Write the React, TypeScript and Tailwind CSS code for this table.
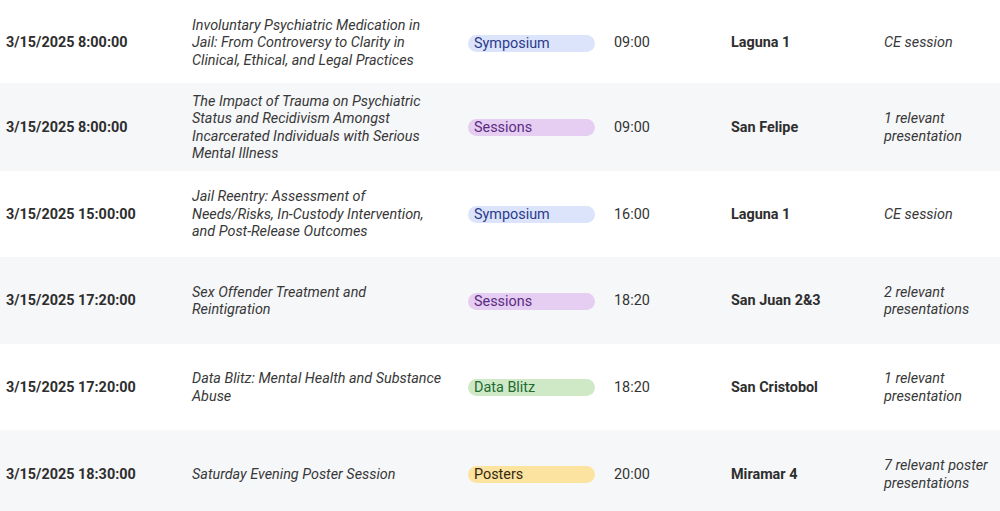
const sessions = [
  {
    date: "3/15/2025 8:00:00",
    title: "Involuntary Psychiatric Medication in Jail: From Controversy to Clarity in Clinical, Ethical, and Legal Practices",
    type: "Symposium",
    end: "09:00",
    room: "Laguna 1",
    note: "CE session",
    h: "h-[83px] pt-[3px]",
  },
  {
    date: "3/15/2025 8:00:00",
    title: "The Impact of Trauma on Psychiatric Status and Recidivism Amongst Incarcerated Individuals with Serious Mental Illness",
    type: "Sessions",
    end: "09:00",
    room: "San Felipe",
    note: "1 relevant presentation",
    h: "h-[88px] pt-[1px]",
  },
  {
    date: "3/15/2025 15:00:00",
    title: "Jail Reentry: Assessment of Needs/Risks, In-Custody Intervention, and Post-Release Outcomes",
    type: "Symposium",
    end: "16:00",
    room: "Laguna 1",
    note: "CE session",
    h: "h-[86px] pt-[1px]",
  },
  {
    date: "3/15/2025 17:20:00",
    title: "Sex Offender Treatment and Reintigration",
    type: "Sessions",
    end: "18:20",
    room: "San Juan 2&3",
    note: "2 relevant presentations",
    h: "h-[87px] pt-[1px]",
  },
  {
    date: "3/15/2025 17:20:00",
    title: "Data Blitz: Mental Health and Substance Abuse",
    type: "Data Blitz",
    end: "18:20",
    room: "San Cristobol",
    note: "1 relevant presentation",
    h: "h-[86px] pt-[1px]",
  },
  {
    date: "3/15/2025 18:30:00",
    title: "Saturday Evening Poster Session",
    type: "Posters",
    end: "20:00",
    room: "Miramar 4",
    note: "7 relevant poster presentations",
    h: "h-[88px] pt-[1px]",
  },
];

const badgeStyles: Record<string, string> = {
  Symposium: "bg-[#dbe4fb] text-[#2c3a8a]",
  Sessions: "bg-[#e6cdf2] text-[#5a2c82]",
  "Data Blitz": "bg-[#cfe9c7] text-[#1e6b33]",
  Posters: "bg-[#fde3a0] text-[#33290f]",
};

export default function App() {
  return (
    <div className="w-[1000px] h-[511px] overflow-hidden bg-white font-['Roboto',sans-serif] text-[14.4px] leading-[17.5px] text-[#333333]">
      {sessions.map((s, i) => (
        <div
          key={i}
          className={`grid grid-cols-[192px_276px_146px_117px_153px_1fr] items-center ${s.h} ${
            i % 2 === 1 ? "bg-[#f6f7f9]" : "bg-white"
          }`}
        >
          <div className="pl-[6px] font-bold text-[#2e2e2e]">{s.date}</div>
          <div className="w-[253px] italic text-[#383838]">{s.title}</div>
          <div>
            <span
              className={`block w-[127px] h-[17px] rounded-full px-[6px] leading-[17px] ${badgeStyles[s.type]}`}
            >
              {s.type}
            </span>
          </div>
          <div>{s.end}</div>
          <div className="font-bold text-[#2e2e2e]">{s.room}</div>
          <div className="w-[112px] italic text-[#383838]">{s.note}</div>
        </div>
      ))}
    </div>
  );
}
